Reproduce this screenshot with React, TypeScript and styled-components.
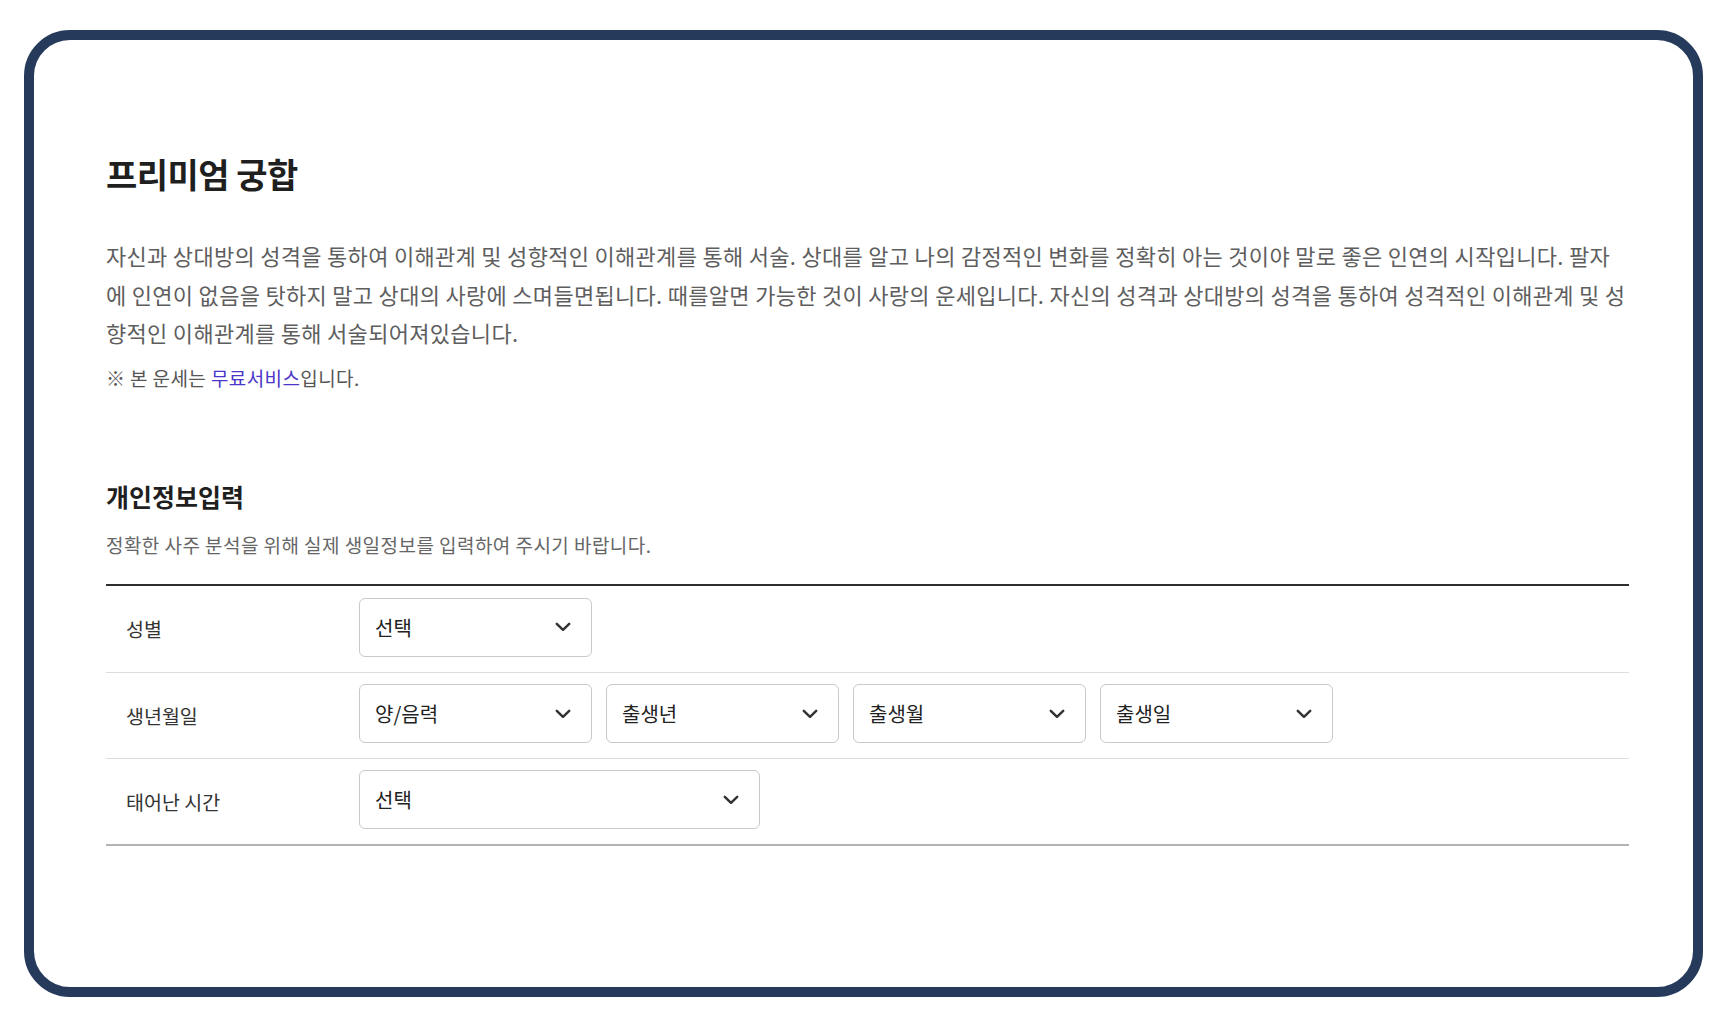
import React from "react";
import styled, { createGlobalStyle } from "styled-components";

const GlobalStyle = createGlobalStyle`
  html, body {
    margin: 0;
    padding: 0;
    background: #ffffff;
  }
  body {
    font-family: "Noto Sans CJK KR", "Noto Sans", sans-serif;
    -webkit-font-smoothing: antialiased;
  }
  * {
    box-sizing: border-box;
  }
`;

const Page = styled.div`
  padding: 30px 25px 0 24px;
`;

const Frame = styled.section`
  height: 967px;
  border: 10px solid #263b5b;
  border-radius: 46px;
  background: #ffffff;
  padding: 111px 64px 0 72px;
`;

const Title = styled.h1`
  margin: 0;
  font-size: 34px;
  line-height: 46px;
  font-weight: 700;
  letter-spacing: -0.5px;
  color: #1f1f1f;
`;

const Intro = styled.p`
  margin: 39px 0 0;
  font-size: 22px;
  line-height: 38.5px;
  color: #5e5e5e;
  letter-spacing: 0.3px;
`;

const Note = styled.p`
  margin: 12px 0 0;
  font-size: 19px;
  line-height: 27px;
  letter-spacing: 0.4px;
  color: #555555;
`;

const Highlight = styled.span`
  color: #4a36c8;
`;

const SectionTitle = styled.h2`
  margin: 89px 0 0;
  font-size: 25px;
  line-height: 33px;
  font-weight: 700;
  color: #1f1f1f;
`;

const SectionDesc = styled.p`
  margin: 19px 0 0;
  font-size: 19px;
  line-height: 26px;
  letter-spacing: 0.45px;
  color: #666666;
`;

const FormTable = styled.div`
  margin-top: 26px;
  border-top: 2px solid #2e2e2e;
  border-bottom: 2px solid #b3b3b3;
`;

const Row = styled.div`
  display: grid;
  grid-template-columns: 253px 1fr;
  align-items: center;
  height: 86px;
  padding-bottom: 3px;
  & + & {
    border-top: 1px solid #dddddd;
  }
`;

const Label = styled.div`
  padding-left: 20px;
  padding-top: 3px;
  font-size: 19.5px;
  color: #333333;
`;

const Fields = styled.div`
  display: flex;
  gap: 14px;
`;

const SelectBox = styled.div<{ $width: number }>`
  display: flex;
  align-items: center;
  width: ${(p) => p.$width}px;
  height: 59px;
  border: 1px solid #c9c9c9;
  border-radius: 6px;
  background: #ffffff;
`;

const NativeSelect = styled.select`
  flex: 1;
  height: 100%;
  min-width: 0;
  padding: 0 0 0 15px;
  border: none;
  background: transparent;
  appearance: none;
  outline: none;
  font-family: inherit;
  font-size: 20px;
  color: #222222;
  cursor: pointer;
`;

const Chevron = styled.svg`
  flex: none;
  width: 16px;
  height: 10px;
  margin-right: 20px;
`;

const Select = ({ placeholder, width }: { placeholder: string; width: number }) => (
  <SelectBox $width={width}>
    <NativeSelect defaultValue="">
      <option value="">{placeholder}</option>
    </NativeSelect>
    <Chevron viewBox="0 0 16 10" fill="none">
      <path
        d="M1.8 1.8 L8 7.8 L14.2 1.8"
        stroke="#333333"
        strokeWidth="2.5"
        strokeLinecap="round"
        strokeLinejoin="round"
      />
    </Chevron>
  </SelectBox>
);

export default function App() {
  return (
    <>
      <GlobalStyle />
      <Page>
        <Frame>
          <Title>프리미엄 궁합</Title>
          <Intro>
            자신과 상대방의 성격을 통하여 이해관계 및 성향적인 이해관계를 통해 서술. 상대를 알고 나의
            감정적인 변화를 정확히 아는 것이야 말로 좋은 인연의 시작입니다. 팔자에 인연이 없음을 탓하지
            말고 상대의 사랑에 스며들면됩니다. 때를알면 가능한 것이 사랑의 운세입니다. 자신의 성격과
            상대방의 성격을 통하여 성격적인 이해관계 및 성향적인 이해관계를 통해 서술되어져있습니다.
          </Intro>
          <Note>
            ※ 본 운세는 <Highlight>무료서비스</Highlight>입니다.
          </Note>

          <SectionTitle>개인정보입력</SectionTitle>
          <SectionDesc>정확한 사주 분석을 위해 실제 생일정보를 입력하여 주시기 바랍니다.</SectionDesc>

          <FormTable>
            <Row>
              <Label>성별</Label>
              <Fields>
                <Select placeholder="선택" width={233} />
              </Fields>
            </Row>
            <Row>
              <Label>생년월일</Label>
              <Fields>
                <Select placeholder="양/음력" width={233} />
                <Select placeholder="출생년" width={233} />
                <Select placeholder="출생월" width={233} />
                <Select placeholder="출생일" width={233} />
              </Fields>
            </Row>
            <Row>
              <Label>태어난 시간</Label>
              <Fields>
                <Select placeholder="선택" width={401} />
              </Fields>
            </Row>
          </FormTable>
        </Frame>
      </Page>
    </>
  );
}
